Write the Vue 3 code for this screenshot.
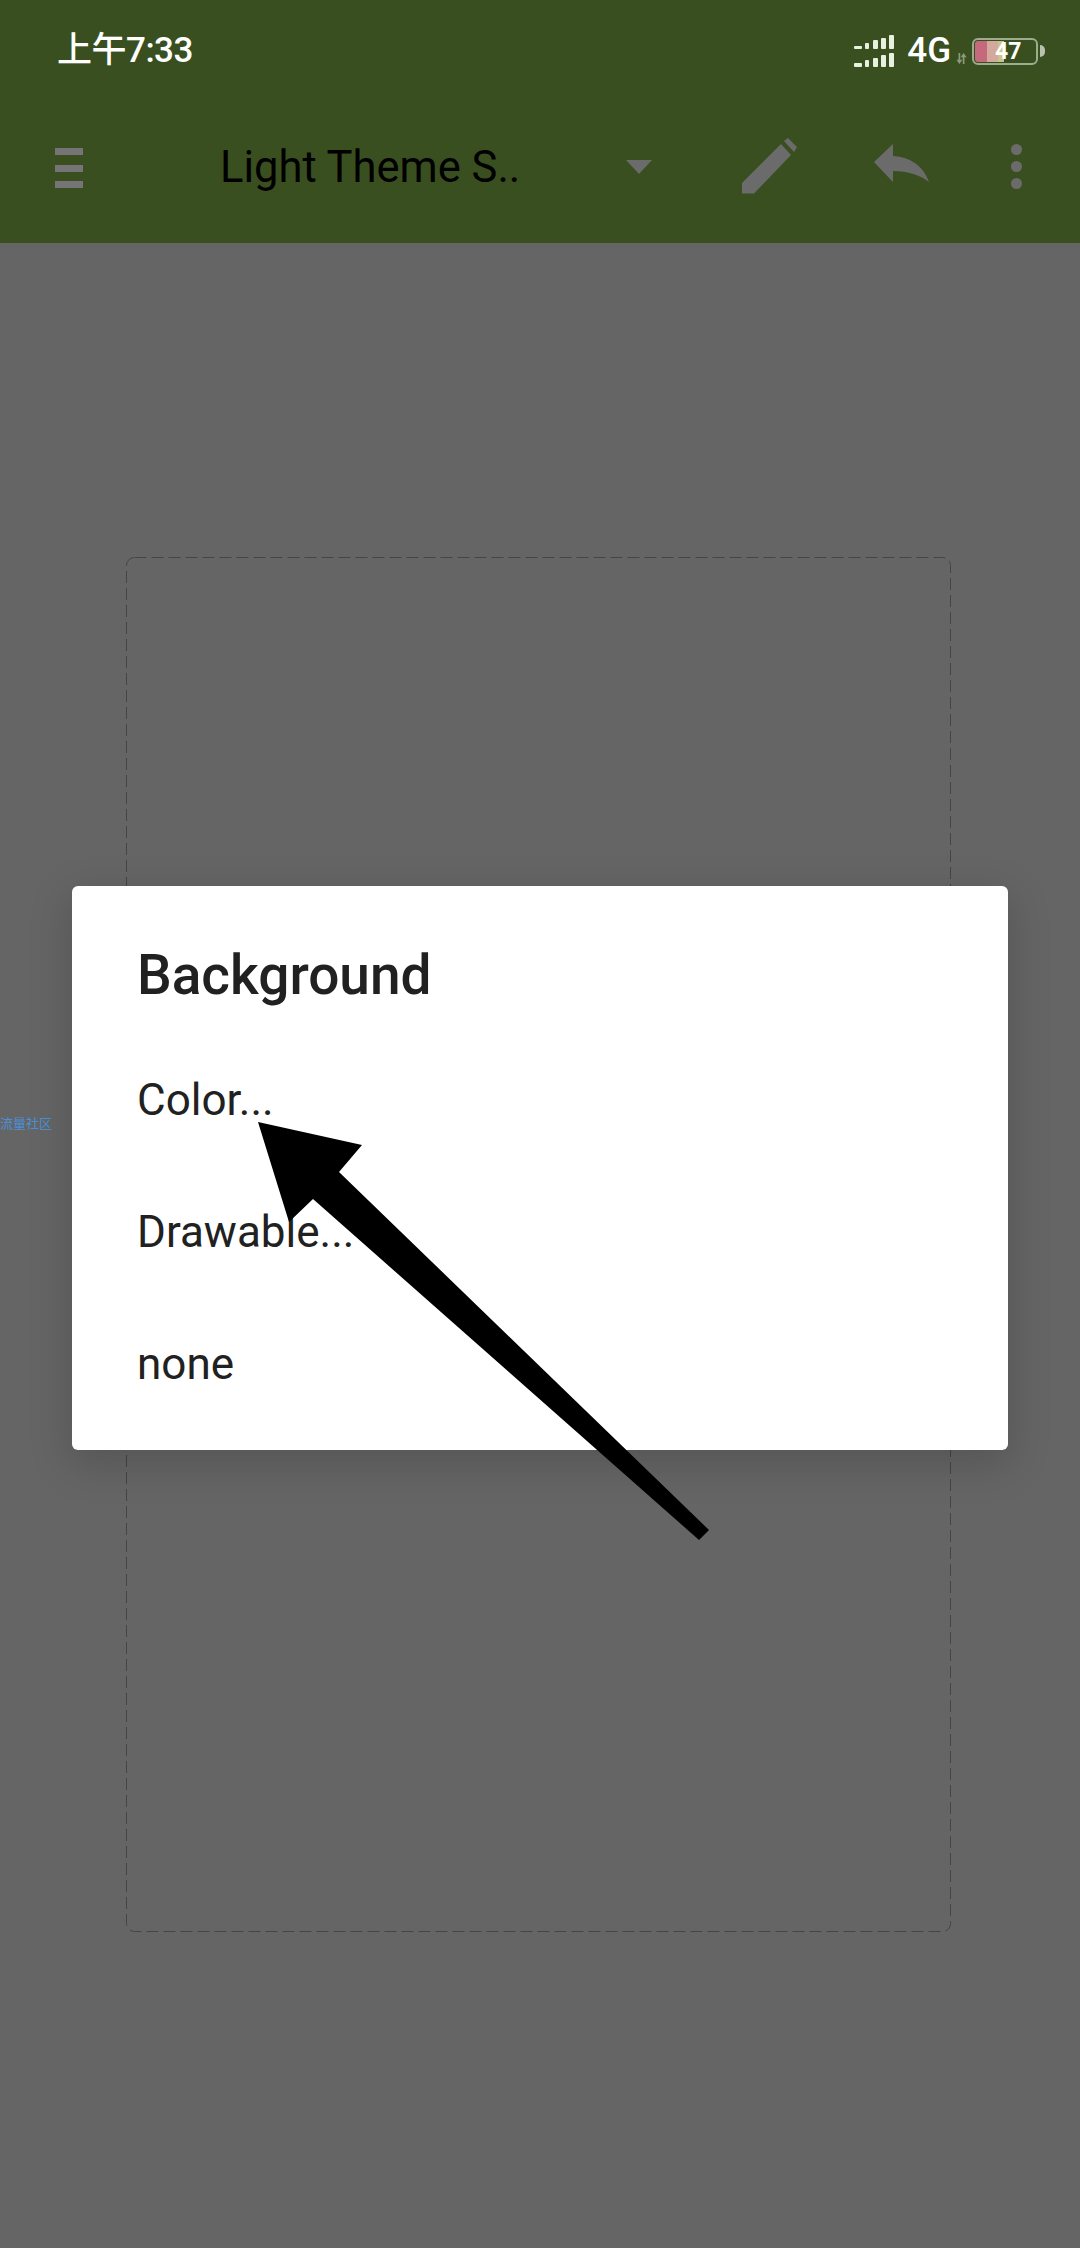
<script setup>
const items = ['Color...', 'Drawable...', 'none']
</script>

<template>
  <div class="page">
    <header class="top">
      <div class="status">
        <span class="time">上午7:33</span>
        <div class="status-right">
          <svg class="signal" width="40" height="32" viewBox="0 0 40 32">
            <g fill="#e8f0df">
              <rect x="0" y="11" width="8" height="3" rx="1" />
              <rect x="11" y="8" width="4" height="6" rx="1" />
              <rect x="19" y="5" width="5" height="9" rx="1" />
              <rect x="27" y="3" width="5" height="11" rx="1" />
              <rect x="35" y="0" width="5" height="14" rx="1" />
              <rect x="0" y="28" width="8" height="4" rx="1" />
              <rect x="11" y="25" width="4" height="7" rx="1" />
              <rect x="19" y="23" width="5" height="9" rx="1" />
              <rect x="27" y="20" width="5" height="12" rx="1" />
              <rect x="35" y="18" width="5" height="14" rx="1" />
            </g>
          </svg>
          <span class="net">4G</span>
          <svg class="updown" width="11" height="11" viewBox="0 0 13 13">
            <path d="M3 0h2v8h2.500L4 13 .5 8H3zM8 13h2V5h2.500L9 0 5.500 5H8z" fill="#8b9a7c" />
          </svg>
          <div class="battery">
            <div class="cell">
              <i class="lvl red"></i><i class="lvl pink"></i><i class="lvl yel"></i>
              <span class="pct">47</span>
            </div>
            <span class="nub"></span>
          </div>
        </div>
      </div>
      <div class="toolbar">
        <div class="menu"><i></i><i></i><i></i></div>
        <span class="title">Light Theme S..</span>
        <span class="caret"></span>
        <svg class="pencil" width="55" height="56" viewBox="0 0 55 56">
          <path d="M0 45 39 6l10 11-37 38.500H0zM42 3l4-3 9 9-3 5z" fill="#6b6b6b" />
        </svg>
        <svg class="reply" width="55" height="39" viewBox="0 0 55 39">
          <path d="M19 0v12c18 1 30 10 36 26C46 31 34 27 19 27v11L0 18z" fill="#6b6b6b" />
        </svg>
        <div class="dots"><i></i><i></i><i></i></div>
      </div>
    </header>

    <main class="canvas">
      <svg class="frame" width="825" height="1375" viewBox="0 0 825 1375">
        <rect x="0.500" y="0.500" width="824" height="1374" rx="8" fill="none" stroke="#454545" stroke-dasharray="12 5" />
      </svg>
    </main>

    <span class="mark">流量社区</span>

    <section class="dialog">
      <h2>Background</h2>
      <p v-for="item in items" :key="item">{{ item }}</p>
    </section>

    <svg class="arrow" width="1080" height="2248" viewBox="0 0 1080 2248">
      <polygon points="258,1122 362,1145 339,1172 709,1530 699,1540 313,1199 289,1222" fill="#000" />
    </svg>
  </div>
</template>

<style>
html, body { background: #656565; }
</style>

<style scoped>
.page {
  position: relative;
  width: 1080px;
  height: 2248px;
  overflow: hidden;
  display: flex;
  flex-direction: column;
  background: #656565;
  font-family: Roboto, "Noto Sans CJK SC", sans-serif;
}
.top {
  height: 243px;
  background: #3a4f1f;
  flex: none;
}
.status {
  height: 102px;
  padding: 0 35px 0 57px;
  display: flex;
  align-items: center;
  justify-content: space-between;
}
.time {
  color: #fff;
  font-size: 35px;
  line-height: 40px;
  font-weight: 500;
  letter-spacing: -0.5px;
}
.status-right {
  display: flex;
  align-items: center;
}
.net {
  margin-left: 13px;
  color: #fff;
  font-size: 35px;
  line-height: 40px;
  font-weight: 500;
}
.updown {
  margin: 14px 0 0 5px;
}
.battery {
  display: flex;
  align-items: center;
  margin-left: 5px;
}
.cell {
  position: relative;
  display: flex;
  width: 66px;
  height: 27px;
  padding: 1px;
  box-sizing: border-box;
  border: 2px solid #9dab8e;
  border-radius: 6px;
}
.lvl { display: block; height: 100%; }
.red { width: 12px; background: #c56a7c; border-radius: 3px 0 0 3px; }
.pink { width: 11px; background: #d3a99c; }
.yel { width: 6px; background: #c9c48a; }
.pct {
  position: absolute;
  left: 21px;
  top: -2px;
  color: #fff;
  font-size: 23px;
  line-height: 27px;
  font-weight: 700;
}
.nub {
  width: 5px;
  height: 12px;
  margin-left: 2px;
  background: #b9c2ac;
  border-radius: 0 6px 6px 0;
}
.toolbar {
  display: flex;
  align-items: center;
  height: 141px;
  padding-left: 55px;
}
.menu {
  display: flex;
  flex-direction: column;
  gap: 9.500px;
  margin-top: -9px;
}
.menu i {
  display: block;
  width: 28px;
  height: 7px;
  background: #757575;
}
.title {
  width: 302px;
  margin-left: 137px;
  margin-top: -10px;
  color: #000;
  font-size: 43.500px;
  white-space: nowrap;
}
.caret {
  width: 0;
  height: 0;
  margin-left: 104px;
  margin-top: -11px;
  border-left: 13px solid transparent;
  border-right: 13px solid transparent;
  border-top: 14px solid #6b6b6b;
}
.pencil {
  margin-left: 90px;
  margin-top: -14px;
}
.reply {
  margin-left: 77px;
  margin-top: -18px;
}
.dots {
  display: flex;
  flex-direction: column;
  gap: 6px;
  margin-left: 82px;
  margin-top: -13px;
}
.dots i {
  display: block;
  width: 11px;
  height: 11px;
  border-radius: 50%;
  background: #6b6b6b;
}
.canvas {
  flex: 1;
  padding: 314px 0 0 126px;
}
.frame {
  display: block;
}
.mark {
  position: absolute;
  left: 0;
  top: 1114px;
  color: #4a90d9;
  font-size: 13px;
  line-height: 20px;
}
.dialog {
  position: absolute;
  left: 72px;
  top: 886px;
  width: 936px;
  height: 564px;
  box-sizing: border-box;
  padding: 59px 65px 0;
  background: #fff;
  border-radius: 6px;
  box-shadow: 0 12px 40px 4px rgba(0, 0, 0, 0.15);
}
.dialog h2 {
  margin: 0 0 67px;
  color: #212121;
  font-size: 55px;
  line-height: 60px;
  font-weight: 500;
}
.dialog p {
  margin: 0;
  height: 132px;
  color: #212121;
  font-size: 44px;
  line-height: 56px;
}
.arrow {
  position: absolute;
  left: 0;
  top: 0;
}
</style>
